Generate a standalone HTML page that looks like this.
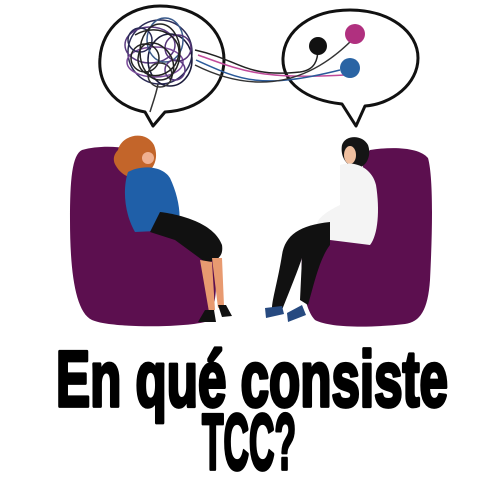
<!DOCTYPE html>
<html><head><meta charset="utf-8"><style>
html,body{margin:0;padding:0;background:#fff;width:500px;height:500px;overflow:hidden}
</style></head><body>
<svg width="500" height="500" viewBox="0 0 500 500" xmlns="http://www.w3.org/2000/svg">
<rect width="500" height="500" fill="#fff"/>
<!-- bubbles -->
<path d="M145 112 C110 105 98 80 100 58 C102 28 128 6 160 6 C198 6 224 30 224 60 C224 88 200 110 165 112 L153 126 Z" fill="none" stroke="#111" stroke-width="3" stroke-linejoin="round"/>
<path d="M342 104 C305 100 282 82 283 58 C284 30 312 10 350 10 C390 10 418 32 418 58 C418 84 392 104 365 106 L356 126 Z" fill="none" stroke="#111" stroke-width="3" stroke-linejoin="round"/>
<!-- threads -->
<g fill="none" stroke-width="1.5">
<path d="M195 50 C240 60 245 78 300 72 C315 70 318 60 318 48" stroke="#222"/>
<path d="M198 55 C240 70 260 80 345 75" stroke="#c04a9a"/>
<path d="M196 60 C240 80 260 90 340 70" stroke="#2a5a9a"/>
<path d="M195 65 C245 90 300 92 352 40" stroke="#333"/>
</g>
<!-- tangle -->
<g fill="none" stroke-width="1.5">
<circle cx="160" cy="52" r="32" stroke="#2a2a55"/>
<ellipse cx="150" cy="45" rx="25" ry="18" stroke="#5a3a80"/>
<ellipse cx="170" cy="60" rx="22" ry="26" stroke="#1a1a3a"/>
<ellipse cx="155" cy="62" rx="28" ry="15" stroke="#7a4a9a"/>
<ellipse cx="165" cy="40" rx="18" ry="22" stroke="#3a5a8a"/>
<circle cx="145" cy="58" r="14" stroke="#222"/>
<circle cx="178" cy="48" r="13" stroke="#553377"/>
<circle cx="160" cy="75" r="12" stroke="#333"/>
<circle cx="140" cy="40" r="12" stroke="#2a2a55"/>
<circle cx="175" cy="70" r="10" stroke="#5a3a80"/>
<ellipse cx="160" cy="52" rx="20" ry="28" stroke="#222"/>
<path d="M135 35 C160 20 190 40 175 65 C160 85 130 75 140 50 C150 30 185 55 170 80" stroke="#222"/>
<path d="M158 84 C156 95 152 105 150 112" stroke="#333"/>
</g>
<!-- balls -->
<circle cx="318" cy="46" r="9" fill="#111"/>
<circle cx="355" cy="34" r="10" fill="#b0307f"/>
<circle cx="350" cy="68" r="10" fill="#2a64a4"/>
<!-- left chair -->
<path d="M82 150 C100 145 125 146 140 152 C150 158 150 200 160 215 C180 230 210 232 215 260 C218 290 215 315 205 322 C180 328 110 328 92 320 C75 312 70 270 70 220 C70 180 72 155 82 150 Z" fill="#5c0f4f"/>
<!-- left woman -->
<path d="M118 150 C122 134 146 130 154 145 C160 160 152 172 142 176 C132 180 122 176 116 166 C112 160 114 154 118 150 Z" fill="#c3652a"/>
<path d="M128 172 C140 165 162 165 170 178 C178 195 182 215 178 230 L135 232 C125 215 122 190 128 172 Z" fill="#1f5fa8"/>
<path d="M160 212 C185 215 215 225 222 245 C224 258 215 262 205 262 L175 240 L150 232 Z" fill="#111"/>
<path d="M200 260 L212 262 L215 310 L209 312 Z M212 258 L222 258 L224 306 L218 308 Z" fill="#e89a70"/>
<path d="M205 310 L214 310 L216 322 L198 322 Z M218 305 L226 305 L232 316 L222 317 Z" fill="#111"/>
<circle cx="148" cy="158" r="6" fill="#f0b090"/>
<!-- right chair -->
<path d="M370 150 C395 146 420 148 428 158 C434 180 432 240 430 280 C428 310 420 322 405 324 C370 328 330 328 315 320 C305 310 300 280 302 255 C305 240 320 238 345 236 C360 220 358 160 370 150 Z" fill="#5c0f4f"/>
<!-- right woman -->
<path d="M342 145 C345 135 362 134 368 145 C372 156 366 168 356 168 C346 166 340 156 342 145 Z" fill="#151515"/>
<ellipse cx="350" cy="155" rx="6" ry="9" fill="#f0c0a0"/>
<path d="M340 165 C355 160 372 168 376 185 C380 210 378 235 370 245 L330 240 L318 230 C312 222 325 212 340 205 Z" fill="#f4f4f4"/>
<path d="M330 222 C300 225 285 235 282 255 C278 280 272 300 272 308 L282 310 C290 290 298 270 302 258 L300 300 L308 305 C315 280 320 258 330 245 Z" fill="#111"/>
<path d="M265 308 L282 306 L284 314 L266 318 Z M287 313 L302 305 L306 315 L288 322 Z" fill="#274a80"/>
<!-- text -->
<g font-family="Liberation Sans Narrow, Liberation Sans, sans-serif" font-weight="bold" fill="#000" stroke="#000" stroke-width="3.5" stroke-linejoin="round">
<g transform="translate(0,406) scale(1,1.07)"><text x="56" y="0" font-size="74" textLength="392" lengthAdjust="spacingAndGlyphs">En qué consiste</text></g>
<g transform="translate(0,469) scale(1,1.07)"><text x="202" y="0" font-size="74" textLength="94" lengthAdjust="spacingAndGlyphs">TCC?</text></g>
</g>
</svg>
</body></html>
